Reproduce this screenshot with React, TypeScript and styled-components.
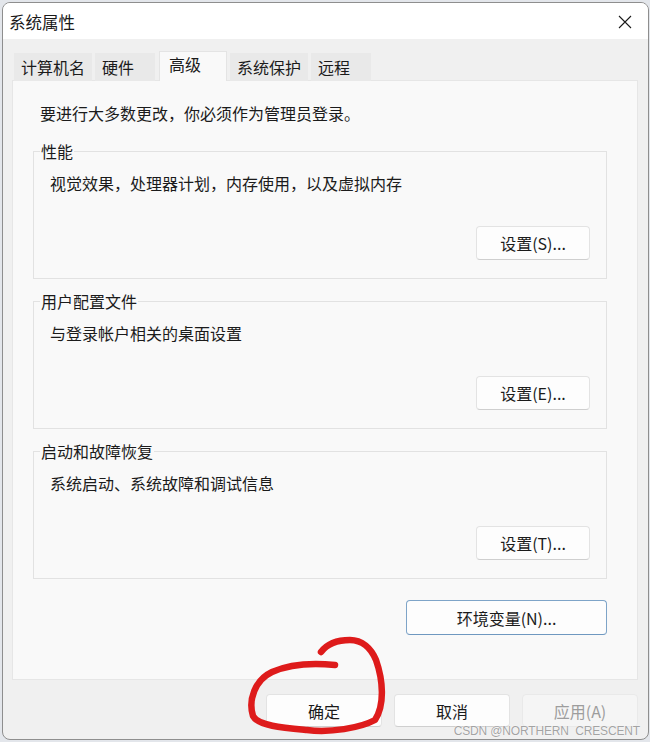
import React from "react";
import styled, { createGlobalStyle } from "styled-components";

const GlobalStyle = createGlobalStyle`
  html, body {
    margin: 0;
    padding: 0;
    background: #e3e6eb;
  }
  body {
    font-family: "Noto Sans CJK SC", "Noto Sans", sans-serif;
    color: #1b1b1b;
  }
  * { box-sizing: border-box; }
`;

const Window = styled.div`
  position: relative;
  margin: 2px 1px 0 2px;
  width: 647px;
  height: 738px;
  border: 1px solid #8e8e8e;
  border-radius: 8px;
  overflow: hidden;
  background: #f0f0f0;
  display: flex;
  flex-direction: column;
`;

const TitleBar = styled.div`
  height: 36px;
  background: #ffffff;
  display: flex;
  align-items: center;
  justify-content: space-between;
  padding: 0 15px 0 6px;
  flex-shrink: 0;
`;

const Title = styled.div`
  font-size: 16.5px;
  line-height: 22px;
  color: #1a1a1a;
  padding-top: 1px;
`;

const CloseButton = styled.div`
  width: 16px;
  height: 16px;
  display: flex;
  align-items: center;
  justify-content: center;
  margin-top: 1px;
`;

const Body = styled.div`
  flex: 1;
  display: flex;
  flex-direction: column;
  padding: 12px 10px 0 9px;
`;

const TabBar = styled.div`
  display: flex;
  align-items: flex-end;
  gap: 3px;
  padding-left: 2px;
  height: 30px;
`;

const Tab = styled.div<{ $active?: boolean }>`
  height: ${(p) => (p.$active ? "30px" : "28px")};
  min-width: ${(p) => (p.$active ? "68px" : "60px")};
  padding: ${(p) => (p.$active ? "1px 9px 0 9px" : "3px 7px 0 7px")};
  margin-left: ${(p) => (p.$active ? "1px" : "0")};
  background: ${(p) => (p.$active ? "#f9f9f9" : "#e9e9e9")};
  font-size: 16px;
  line-height: 22px;
  color: #1b1b1b;
  white-space: nowrap;
  position: relative;
  z-index: ${(p) => (p.$active ? 1 : 0)};
  border: ${(p) => (p.$active ? "1px solid #e4e4e4" : "none")};
  border-bottom: none;
`;

const Panel = styled.div`
  height: 600px;
  background: #f9f9f9;
  border: 1px solid #e6e6e6;
  padding: 21px 30px 0 20px;
  display: flex;
  flex-direction: column;
  margin-top: -1px;
`;

const Notice = styled.div`
  font-size: 16px;
  line-height: 22px;
  padding-left: 7px;
`;

const Group = styled.fieldset`
  margin: 11px 0 0 0;
  border: 1px solid #e2e2e2;
  padding: 10px 16px 18px 6px;
  display: flex;
  flex-direction: column;
  min-width: 0;

  &:first-of-type {
    margin-top: 16px;
  }
`;

const Legend = styled.legend`
  font-size: 16px;
  line-height: 22px;
  padding: 0 1px;
  margin-left: 0;
`;

const Description = styled.div`
  font-size: 16px;
  line-height: 22px;
  padding-left: 10px;
`;

const Button = styled.div<{ $width: number; $variant?: "default" | "focus" | "disabled"; $height?: number }>`
  width: ${(p) => p.$width}px;
  height: ${(p) => p.$height ?? 34}px;
  display: flex;
  align-items: center;
  justify-content: center;
  font-size: 16px;
  line-height: 22px;
  border-radius: 4px;
  background: ${(p) => (p.$variant === "disabled" ? "#f5f5f5" : "#fdfdfd")};
  color: ${(p) => (p.$variant === "disabled" ? "#9d9d9d" : "#1b1b1b")};
  border: 1px solid
    ${(p) =>
      p.$variant === "focus" ? "#7ea4c8" : p.$variant === "disabled" ? "#e9e9e9" : "#e3e3e3"};
  border-bottom-color: ${(p) =>
    p.$variant === "focus" ? "#6f98c0" : p.$variant === "disabled" ? "#e9e9e9" : "#cfcfcf"};
  white-space: nowrap;
`;

const GroupButton = styled(Button)`
  align-self: flex-end;
  margin-top: 32px;
`;

const EnvButton = styled(Button)`
  align-self: flex-end;
  margin-top: 21px;
`;

const Footer = styled.div`
  flex: 1;
  display: flex;
  justify-content: flex-end;
  align-items: flex-start;
  gap: 12px;
  padding-top: 14px;
`;

const Overlay = styled.svg`
  position: absolute;
  left: -3px;
  top: -3px;
  width: 650px;
  height: 742px;
  pointer-events: none;
`;

const Watermark = styled.div`
  position: absolute;
  right: 8px;
  bottom: 1px;
  font-family: "Liberation Sans", Arial, sans-serif;
  font-size: 12px;
  letter-spacing: -0.15px;
  line-height: 14px;
  color: #a3a3a3;
  text-shadow: 0 0 1px #ffffff, 0 0 1px #ffffff;
  white-space: pre;
  pointer-events: none;
`;

const groups = [
  { legend: "性能", desc: "视觉效果，处理器计划，内存使用，以及虚拟内存", btn: "设置(S)..." },
  { legend: "用户配置文件", desc: "与登录帐户相关的桌面设置", btn: "设置(E)..." },
  { legend: "启动和故障恢复", desc: "系统启动、系统故障和调试信息", btn: "设置(T)..." },
];

const tabs = ["计算机名", "硬件", "高级", "系统保护", "远程"];

export default function App() {
  return (
    <>
      <GlobalStyle />
      <Window>
        <TitleBar>
          <Title>系统属性</Title>
          <CloseButton>
            <svg width="14" height="14" viewBox="0 0 14 14">
              <path d="M1 1 L13 13 M13 1 L1 13" stroke="#1a1a1a" strokeWidth="1.1" fill="none" />
            </svg>
          </CloseButton>
        </TitleBar>
        <Body>
          <TabBar>
            {tabs.map((t) => (
              <Tab key={t} $active={t === "高级"}>
                {t}
              </Tab>
            ))}
          </TabBar>
          <Panel>
            <Notice>要进行大多数更改，你必须作为管理员登录。</Notice>
            {groups.map((g) => (
              <Group key={g.legend}>
                <Legend>{g.legend}</Legend>
                <Description>{g.desc}</Description>
                <GroupButton $width={114}>{g.btn}</GroupButton>
              </Group>
            ))}
            <EnvButton $width={201} $height={35} $variant="focus">
              环境变量(N)...
            </EnvButton>
          </Panel>
          <Footer>
            <Button $width={116} $height={33}>确定</Button>
            <Button $width={116} $height={33}>取消</Button>
            <Button $width={116} $height={33} $variant="disabled">应用(A)</Button>
          </Footer>
        </Body>
        <Watermark>{"CSDN @NORTHERN  CRESCENT"}</Watermark>
        <Overlay viewBox="0 0 650 742">
          <path
            d="M335,665 C315,663 290,664 272,672 C255,680 248,700 253,716 C258,726 285,728 307,730 C330,733 360,728 375,720 C385,705 383,680 376,660 C371,648 362,640 350,640 C338,640 327,644 321,652"
            stroke="#de1b1b"
            strokeWidth="6.5"
            strokeLinecap="round"
            strokeLinejoin="round"
            fill="none"
          />
        </Overlay>
      </Window>
    </>
  );
}
